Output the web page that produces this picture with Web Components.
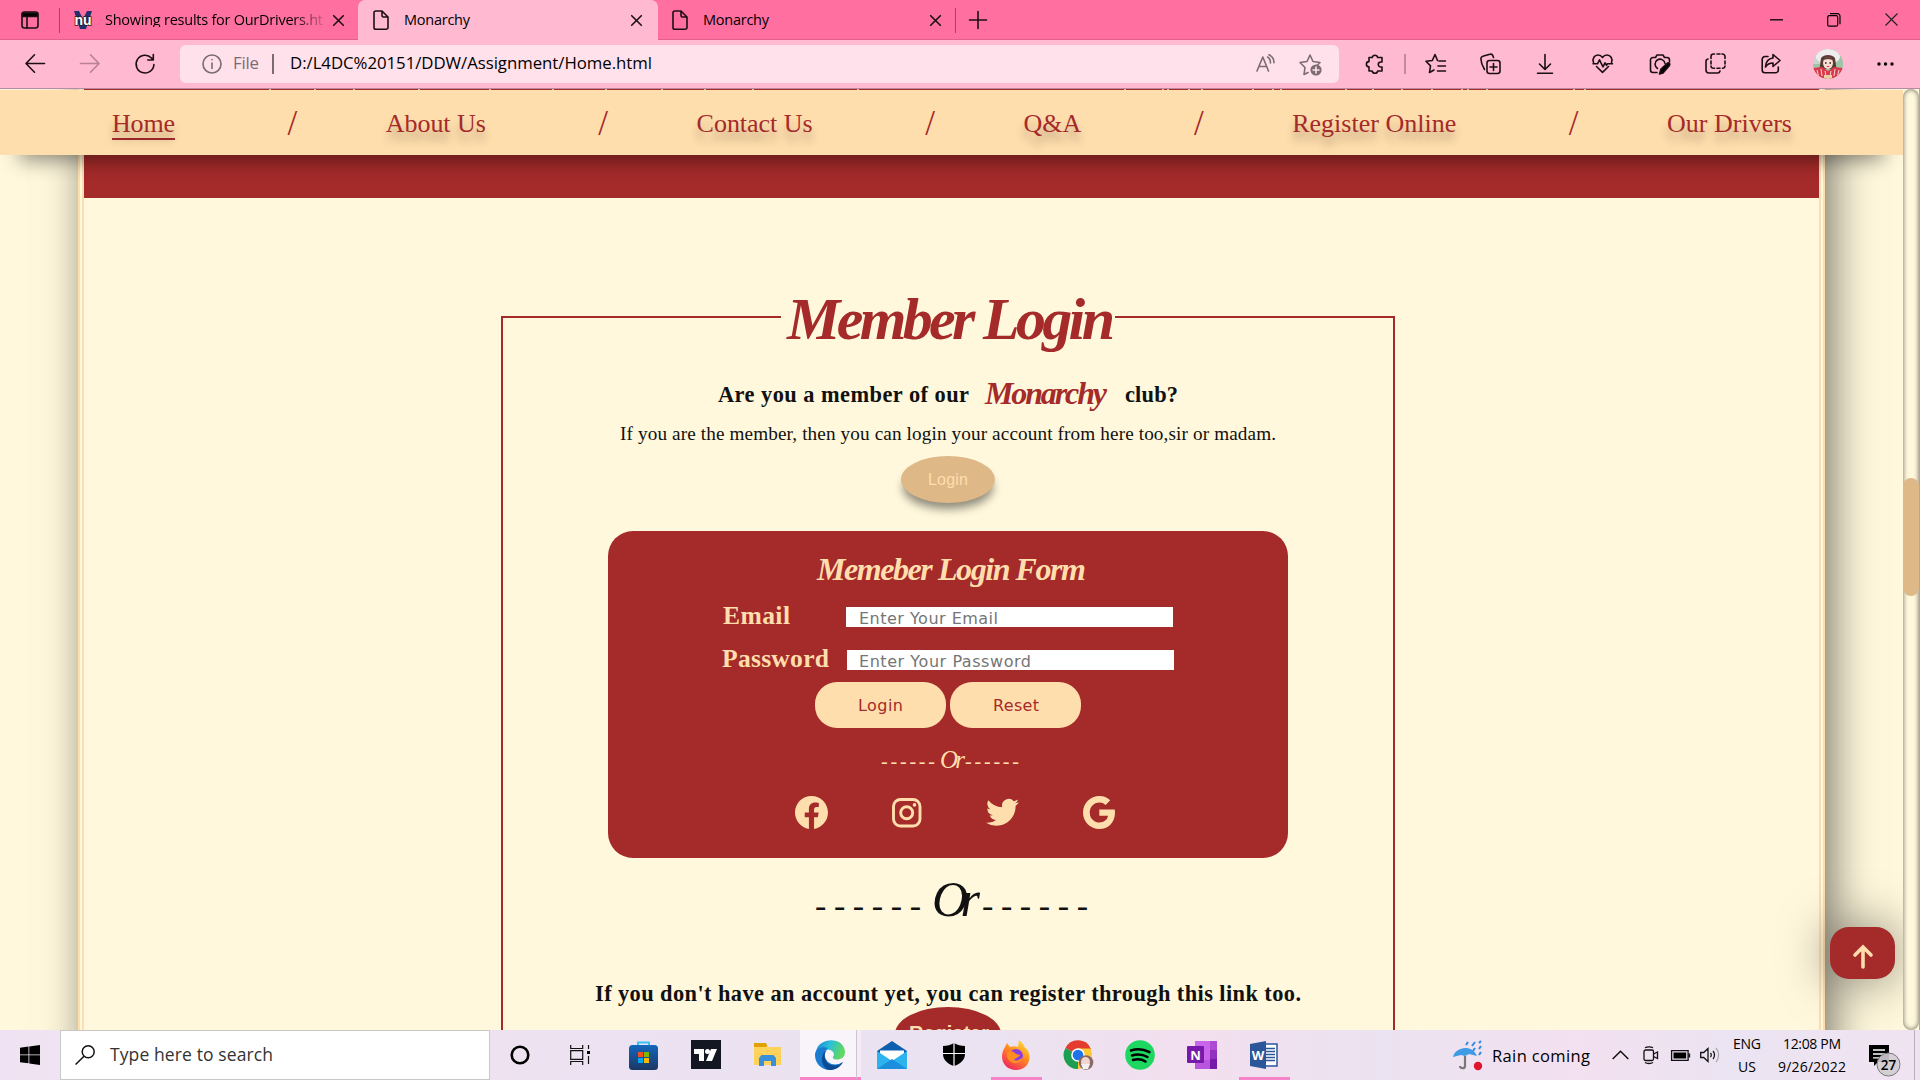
<!DOCTYPE html>
<html lang="en">
<head>
<meta charset="utf-8">
<title>Monarchy</title>
<style>
html,body{margin:0;height:1080px;overflow:hidden}
body{width:1920px;background:#fff8dc}
</style>
</head>
<body>
<browser-desktop></browser-desktop>
<script>
/* Baseline offset from the middle of the line box, per font family. */
const FONTS = {
  serif: ['"Liberation Serif", serif', .3375],
  script: ['"Edwardian Script ITC", "Liberation Serif", serif', .3375],
  sans: ['"Liberation Sans", sans-serif', .3465],
  ui: ['"Open Sans", sans-serif', .388],
  form: ['"DejaVu Sans", sans-serif', .346]
};
/* A text item: x and width on the line, baseline y. */
const T = (text, x, w, size, base, font = 'ui', style = '') => {
  const [fam, k] = FONTS[font];
  return {x, w, y: base - size / 2 - k * size,
    html: m => `<fit-text w="${w}" style="${m};height:${size}px;line-height:${size}px;font-size:${size}px;font-family:${fam.replace(/"/g, "'")};${style}">${text}</fit-text>`};
};
/* A drawn item. */
const I = (x, y, w, h, body, attrs = '') => ({x, w, y,
  html: m => `<svg style="${m}" width="${w}" height="${h}" viewBox="0 0 ${w} ${h}" ${attrs}>${body}</svg>`});
/* A box item. */
const B = (x, y, w, h, style, inner = '') => ({x, w, y,
  html: m => `<div style="${m};width:${w}px;height:${h}px;${style}">${inner}</div>`});
/* A flex row: each item follows the one before it, spaced with margins. */
const row = (left, top, height, items) => {
  let at = left;
  return `<div class="row" style="height:${height}px">` + items.map(i => {
    const m = `margin:${(i.y - top).toFixed(2)}px 0 0 ${(i.x - at).toFixed(2)}px`;
    at = i.x + i.w;
    return i.html(m);
  }).join('') + '</div>';
};
const BASE = `<style>
:host{display:block;box-sizing:border-box}
*{box-sizing:border-box}
.row{display:flex;align-items:flex-start}
.row>*{flex:none}
svg{display:block;overflow:visible}
</style>`;
const define = (name, css, body) => customElements.define(name, class extends HTMLElement {
  constructor() {
    super();
    this.attachShadow({mode: 'open'}).innerHTML = BASE + `<style>${css}</style>` + body;
  }
});

/* Text that spreads its letters to fill the given width. */
customElements.define('fit-text', class extends HTMLElement {
  constructor() {
    super();
    this.attachShadow({mode: 'open'}).innerHTML =
      '<style>:host{display:block;white-space:pre}span{display:inline-block}</style><span><slot></slot></span>';
  }
  connectedCallback() {
    const w = +this.getAttribute('w'), s = this.shadowRoot.querySelector('span');
    this.style.width = w + 'px';
    const n = Math.max(1, this.textContent.length - 1);
    s.style.letterSpacing = ((w - s.getBoundingClientRect().width) / n).toFixed(3) + 'px';
  }
});

const K = 'fill="none" stroke="#1b0f14" stroke-width="1.6" stroke-linecap="round" stroke-linejoin="round"';
const cross = x => I(x, 15, 11, 11, '<path d="M.7.7l9.6 9.6M10.300.7L.7 10.300"/>', K);
const file = x => I(x, 10, 16, 20, '<path d="M2.500 1H9l6 6v10.500a1.800 1.800 0 0 1-1.800 1.800H2.800A1.800 1.800 0 0 1 1 17.500V2.800A1.800 1.800 0 0 1 2.800 1M9 1v4.500A1.500 1.500 0 0 0 10.500 7H15"/>', K);

define('tab-strip', `
:host{height:40px;background:#ff6fa0;border-bottom:1px solid #e0608e}
.active{height:40px;background:#ffb9d0;border-radius:7px 7px 0 0}`,
row(0, 0, 40, [
  I(21, 11, 18, 18, '<rect x="1" y="1" width="16" height="16" rx="2.500"/><path d="M1.500 2h15v3.500h-15z" fill="#000"/><path d="M6 5v12"/>', K),
  B(59, 8, 1, 25, 'background:#a3456a'),
  I(73, 10, 20, 20, '<path d="M1 1h5l4 8 4-8h5l-6 18H7z" fill="#24306e"/><text x="10" y="14.500" text-anchor="middle" textLength="17" font-family="Liberation Sans" font-weight="bold" font-size="14" fill="#fff" stroke="#222" stroke-width="1.600" paint-order="stroke">nu</text>'),
  T('Showing results for OurDrivers.ht', 105, 218, 14.5, 25.6, 'ui', '-webkit-mask-image:linear-gradient(90deg,#000 86%,rgba(0,0,0,.15))'),
  cross(333),
  {x: 358, w: 300, y: 0, html: m => `<div class="active" style="${m};width:300px">` + row(358, 0, 40, [file(373), T('Monarchy', 404, 66, 14.5, 25.6), cross(631)]) + '</div>'},
  file(672), T('Monarchy', 703, 66, 14.5, 25.6), cross(930),
  B(955, 8, 1, 25, 'background:#a3456a'),
  I(969, 11, 18, 18, '<path d="M9 .5v17M.5 9h17"/>', K),
  I(1770, 19, 13, 2, '<path d="M0 .8h13" stroke="#000" stroke-width="1.300"/>'),
  I(1827, 13, 14, 14, '<rect x=".7" y="2.700" width="10" height="10.500" rx="1.500"/><path d="M3 .7h7.500a2.500 2.500 0 0 1 2.500 2.500v8"/>', 'fill="none" stroke="#000" stroke-width="1.200"'),
  I(1885, 13, 13, 13, '<path d="M.5.5l12 12M12.500.5l-12 12" stroke="#222" stroke-width="1.200"/>')
]));

const G = K.replace('#1b0f14', '#7b6b72');
define('tool-bar', `
:host{height:49px;background:#ffb9d0;border-bottom:1px solid #b98ba0}
.addr{background:#ffe1eb;border-radius:6px}`,
row(0, 40, 48, [
  I(25, 54, 20, 20, '<path d="M19.500 9.500H1M9.500.8L1 9.500l8.500 8.700"/>', K),
  I(80, 54, 20, 20, '<path d="M.5 9.500H19M10.500.8l8.500 8.700-8.500 8.700"/>', K.replace('#1b0f14', '#b98195')),
  I(135, 54, 20, 20, '<path d="M18.900 10.500a8.900 8.900 0 1 1-2.400-6.500L18 5.800M18.300.5v5.500h-5.500"/>', K),
  {x: 180, w: 1159, y: 45, html: m => `<div class="addr" style="${m};width:1159px;height:38px">` + row(180, 45, 38, [
    I(202, 54, 20, 20, '<circle cx="10" cy="10" r="9"/><path d="M10 9v5.500M10 5.500v.3"/>', G),
    T('File', 233, 26, 16.800, 70, 'ui', 'color:#7b6b72'),
    B(272, 54, 1.5, 20, 'background:#7b6b72'),
    T('D:/L4DC%20151/DDW/Assignment/Home.html', 290, 362, 16.800, 70.400),
    I(1256, 54, 20, 18, '<path d="M1 17L6.800 3l5.700 14M3 12.500h7.700M11.500 3c2 1 3 3 3 6M13 .8c3.500 1.500 5 4.500 5 8"/>', G),
    I(1299, 53, 24, 23, '<path d="M9 19.500L5 21.500l1-7L1 9.500l7-1L11 2l3 6.500 7 1-2.500 2.500"/><circle cx="17" cy="17" r="5.600" fill="#7b6b72" stroke="none"/><path d="M17 14v6M14 17h6" stroke="#ffe1eb"/>', G)
  ]) + '</div>'},
  I(1365, 54, 19, 20, '<path d="M4 3.500h3.200a2.800 2.800 0 0 1 5.500 0H17v4.500h-1.200a2.500 2.500 0 0 0 0 5H17v4h-4.300a2.800 2.800 0 0 1-5.500 0H4v-4.200a2.600 2.600 0 0 1 0-5.200z"/>', K),
  B(1404, 54, 1.5, 20, 'background:#c08ba0'),
  I(1425, 53, 21, 21, '<path d="M12.500 7.500L10 1.500 7.300 7.500 1 8.300l4.500 4.600-1 6.600 4.500-2.500M14 8h6.500M13 13h7.500M12.500 18h8"/>', K),
  I(1480, 53, 21, 21, '<rect x="7" y="7.500" width="13" height="13" rx="2.500"/><path d="M13.500 10.500v7M10 14h7M4.500 16.500C2 12.500 1 9 .8 5.500 1 4 2 3.500 3.500 3L10 1.200c1.500-.3 2.500.3 3 1.800l.5 1.500"/>', K),
  I(1537, 54, 16, 20, '<path d="M8 .5v14.500M2.500 10L8 15.500 13.500 10M.5 19.300h15"/>', K),
  I(1592, 54, 21, 20, '<path d="M1.500 8.500C0 4.500 2.500 1 6 1c2 0 3.500 1 4.500 2.500C11.500 2 13 1 15 1c3.500 0 6 3.500 4.500 7.500M4.500 12.500l6 5.800 6-5.800M1 9.800h4.500l2-4 3.500 7 2-4 1.500 2.500 1-1.500h5"/>', K),
  I(1649, 53, 22, 22, '<path d="M8 19.500H4A2.500 2.500 0 0 1 1.500 17V7A2.500 2.500 0 0 1 4 4.500h2.500L8 2h6l1.500 2.500H18A2.500 2.500 0 0 1 20.500 7v2M8.500 15.500a5 5 0 1 1 7.500-5"/><path d="M10.500 21l1.500-5 6.500-6c1.500-.5 3 .5 2 2.500L14 20z" fill="#000"/>', K),
  I(1705, 53, 21, 21, '<path d="M6 5.500V3.500A2.500 2.500 0 0 1 8.500 1H9.500M12 1h3M17 1h.5A2.500 2.500 0 0 1 20 3.500v2M20 8v3M20 13a2.500 2.500 0 0 1-2.500 2.300M15 15.300h-3M9.500 15.300H8.500A2.500 2.500 0 0 1 6 13M6 11V8M3 6A2.500 2.500 0 0 0 1 8.500V17A3 3 0 0 0 4 20h8.500a2.500 2.500 0 0 0 2.500-2"/>', K),
  I(1761, 53, 20, 21, '<path d="M7 3.500H4A2.800 2.800 0 0 0 1.200 6.300V17A2.800 2.800 0 0 0 4 19.800h10.500a2.800 2.800 0 0 0 2.800-2.800v-3M12 1.500l7 6-7 6v-3.500c-4 0-6 1.500-7.500 4 .3-5 3-8.500 7.500-9z"/>', K),
  I(1813, 49, 30, 30, '<clipPath id="av"><circle cx="15" cy="15" r="15"/></clipPath><g clip-path="url(#av)"><path d="M0 0h30v30H0z" fill="#9dc3a9"/><path d="M0 0h15v15H0z" fill="#c9d4cc"/><ellipse cx="15" cy="7.500" rx="12" ry="7.500" fill="#eeecef"/><path d="M8 9c3-4 11-4 14 0l1.500 11h-17z" fill="#5b3a34"/><ellipse cx="15" cy="14" rx="5" ry="6" fill="#f9dfd6"/><path d="M10 11c2-4 8-4 10 0l-5-1z" fill="#5b3a34"/><path d="M0 19l9-1 6 4 6-4 9 1v11H0z" fill="#d93a4c"/><path d="M4 21l2 8M8 20l1 7M26 21l-2 8M22 20l-1 7M12 22l1 5M18 22l-1 5" stroke="#f9d3d0"/><circle cx="12.800" cy="14" r=".9" fill="#432"/><circle cx="17.200" cy="14" r=".9" fill="#432"/><path d="M13.800 17.500h2.400" stroke="#d33"/><path d="M11 26h8v4h-8z" fill="#e7d0a8"/></g>'),
  I(1877, 62, 17, 4, '<circle cx="2" cy="2" r="1.700"/><circle cx="8.500" cy="2" r="1.700"/><circle cx="15" cy="2" r="1.700"/>')
]));

define('site-nav', `
:host{display:flex;justify-content:space-between;align-items:center;height:65px;padding:3px 111px 0 112px;background:#ffdead;
 box-shadow:0 25px 20px -20px rgba(0,0,0,.45);font:26px/30px "Liberation Serif",serif;color:#a52a2a}
a{display:block;text-shadow:0 9px 8px rgba(0,0,0,.28)}
.on{border-bottom:2px solid #a52a2a;line-height:28px;margin-top:1px}
i{font-style:normal;font-size:35px;margin:0 -12px 0 12px}`,
['Home', 'About Us', 'Contact Us', 'Q&amp;A', 'Register Online', 'Our Drivers'].map((s, n) =>
  `<a${n ? '' : ' class="on"'}><fit-text w="${[63, 100, 116, 58, 164, 125][n]}">${s}</fit-text></a>`).join('<i>/</i>'));

const SC = 'color:#a52a2a;font-weight:bold;font-style:italic;';
const SN = 'color:#ffdead;font-weight:bold;font-style:italic;';
define('login-card', `
:host{width:680px;height:327px;background:#a52a2a;border-radius:25px;color:#ffdead}
.in{background:#fff}
.btn{background:#ffdead;border-radius:22px}`,
row(608, 531, 76, [T('Memeber Login Form', 817, 269, 32, 580, 'script', SN)]) +
row(608, 607, 43, [T('Email', 723, 67, 25.6, 624.500, 'serif', 'font-weight:bold'),
  {x: 846, w: 327, y: 607, html: m => `<div class="in" style="${m};width:327px;height:20px">` + row(846, 607, 20, [T('Enter Your Email', 859, 139, 16, 624.500, 'form', 'color:#757575')]) + '</div>'}]) +
row(608, 650, 32, [T('Password', 722, 107, 25.6, 667.500, 'serif', 'font-weight:bold'),
  {x: 847, w: 327, y: 650, html: m => `<div class="in" style="${m};width:327px;height:20px">` + row(847, 650, 20, [T('Enter Your Password', 859, 172, 16, 667.500, 'form', 'color:#757575')]) + '</div>'}]) +
row(608, 682, 65, [[815, 'Login', 858, 45], [950, 'Reset', 993, 46]].map(([x, s, tx, w]) => (
  {x, w: 131, y: 682, html: m => `<div class="btn" style="${m};width:131px;height:46px">` + row(x, 682, 46, [T(s, tx, w, 16, 712, 'form', 'color:#a52a2a')]) + '</div>'}))) +
row(608, 747, 45, [T('------', 881, 54, 20, 768, 'script', 'font-style:italic'), T('Or', 940, 25, 25, 768, 'script', 'font-style:italic'), T('------', 965, 54, 20, 768, 'script', 'font-style:italic')]) +
row(608, 792, 60, [
  I(795, 796, 33, 33, '<path transform="scale(2.060)" d="M16 8.049c0-4.446-3.582-8.050-8-8.050C3.580 0-.002 3.603-.002 8.050c0 4.017 2.926 7.347 6.750 7.951v-5.625h-2.030V8.050H6.750V6.275c0-2.017 1.195-3.131 3.022-3.131.876 0 1.791.157 1.791.157v1.980h-1.009c-.993 0-1.303.621-1.303 1.258v1.510h2.218l-.354 2.326H9.250V16c3.824-.604 6.750-3.934 6.750-7.951z" fill="#ffdead"/>'),
  I(892, 798, 29, 29, '<rect x="1.500" y="1.500" width="26.500" height="26.500" rx="7"/><circle cx="14.700" cy="14.700" r="6"/><circle cx="22.500" cy="6.900" r="1.800" fill="#ffdead" stroke="none"/>', 'fill="none" stroke="#ffdead" stroke-width="2.900"'),
  I(986, 799, 33, 27, '<path transform="scale(2.060) translate(0 -2)" d="M5.026 15c6.038 0 9.341-5.003 9.341-9.334 0-.14 0-.282-.006-.422A6.685 6.685 0 0 0 16 3.542a6.658 6.658 0 0 1-1.889.518 3.301 3.301 0 0 0 1.447-1.817 6.533 6.533 0 0 1-2.087.793A3.286 3.286 0 0 0 7.875 6.030a9.325 9.325 0 0 1-6.767-3.429 3.289 3.289 0 0 0 1.018 4.382A3.323 3.323 0 0 1 .64 6.575v.045a3.288 3.288 0 0 0 2.632 3.218 3.203 3.203 0 0 1-.865.115 3.230 3.230 0 0 1-.614-.057 3.283 3.283 0 0 0 3.067 2.277A6.588 6.588 0 0 1 .78 13.580a6.320 6.320 0 0 1-.78-.045A9.344 9.344 0 0 0 5.026 15z" fill="#ffdead"/>'),
  I(1083, 796, 33, 33, '<path transform="scale(2.040 2.060)" d="M15.545 6.558a9.420 9.420 0 0 1 .139 1.626c0 2.434-.87 4.492-2.384 5.885h.002C11.978 15.292 10.158 16 8 16A8 8 0 1 1 8 0a7.689 7.689 0 0 1 5.352 2.082l-2.284 2.284A4.347 4.347 0 0 0 8 3.166c-2.087 0-3.860 1.408-4.492 3.304a4.792 4.792 0 0 0 0 3.063h.003c.635 1.893 2.405 3.301 4.492 3.301 1.078 0 2.004-.276 2.722-.764h-.003a3.702 3.702 0 0 0 1.599-2.431H8v-3.080h7.545z" fill="#ffdead"/>')
]));

define('member-panel', `
:host{width:894px;height:760px;border:solid #a52a2a;border-width:0 2px}
.pill{border-radius:50%}`,
row(503, 316, 69, [B(503, 316, 278, 2, 'background:#a52a2a'), T('Member Login', 787, 328, 60, 339, 'script', SC), B(1115, 316, 278, 2, 'background:#a52a2a')]) +
row(503, 385, 38, [T('Are you a member of our', 718, 251, 22.4, 402.500, 'serif', 'font-weight:bold'), T('Monarchy', 985, 122, 32, 404, 'script', SC), T('club?', 1125, 53, 22.4, 402.500, 'serif', 'font-weight:bold')]) +
row(503, 423, 32, [T('If you are the member, then you can login your account from here too,sir or madam.', 620, 656, 19.2, 440, 'serif')]) +
row(503, 455, 76, [{x: 901, w: 94, y: 455.5, html: m => `<div class="pill" style="${m};width:94px;height:47px;background:#deb887;box-shadow:0 8px 10px -2px rgba(0,0,0,.45)">` + row(901, 455, 47, [T('Login', 928, 40, 16, 485, 'sans', 'color:#ffdead')]) + '</div>'}]) +
row(503, 531, 347, [{x: 608, w: 680, y: 531, html: m => `<login-card style="${m}"></login-card>`}]) +
row(503, 878, 100, [T('------', 815, 106, 34, 917, 'script', 'font-style:italic'), T('Or', 932, 48, 50, 916, 'script', 'font-style:italic'), T('------', 982, 106, 34, 917, 'script', 'font-style:italic')]) +
row(503, 978, 29, [T("If you don't have an account yet, you can register through this link too.", 595, 706, 22.4, 1001.500, 'serif', 'font-weight:bold')]) +
row(503, 1007, 60, [{x: 895, w: 106, y: 1007, html: m => `<div class="pill" style="${m};width:106px;height:54px;background:#a52a2a">` + row(895, 1007, 47, [T('Register', 909, 80, 20, 1040, 'sans', 'color:#ffdead;font-weight:bold')]) + '</div>'}]));

const specks = [269,314,353,418,489,552,605,661,704,752,857,1124,1162,1167,1188,1201,1252,1272,1280,1345,1372,1401,1431,1461,1467,1486,1573,1584];
define('site-page', `
:host{position:relative;width:1903px;height:941px;overflow:hidden;background:#fff8dc;color:#111}
site-nav{position:absolute;left:0;right:0;top:1px;z-index:2}
.wrap{margin:-60px 0 0 78px;width:1747px;height:1061px;border:6px double #ffdead;border-width:0 6px;box-shadow:8px 0 40px rgba(0,0,0,.52);background:#fff8dc}
.band{height:169px;padding-top:60px;background:#a52a2a}
member-panel{margin:118px 0 0 417px}
.top{position:absolute;left:1830px;top:838px;width:65px;height:52px;border-radius:19px;background:#a52a2a;box-shadow:0 0 50px rgba(0,0,0,.5);display:flex;align-items:center;justify-content:center}`,
`<site-nav></site-nav><div class="wrap"><div class="band">${row(84, 89, 1, specks.map(x => B(x, 89, 2, 1, 'background:#e8b9a0')))}</div><member-panel></member-panel></div>
<div class="top"><svg width="20" height="24" viewBox="0 0 20 24" style="margin-top:7px" fill="none" stroke="#ffdead" stroke-width="3.600" stroke-linecap="round"><path d="M10 3v19M2 10l8-8 8 8"/></svg></div>`);

define('scroll-track', `
:host{width:17px;height:941px;background:#fff8dc;border-right:1px solid #c69aa6}
.t{height:941px;width:16px;border-radius:8px;box-shadow:inset 0 0 5px rgba(0,0,0,.6);padding-top:389px}
.h{height:118px;border-radius:8px;background:#deb887}`, '<div class="t"><div class="h"></div></div>');

const line = (x, w) => B(x, 1077, w, 3, 'background:#f783c8');
define('task-bar', `
:host{height:50px;background:linear-gradient(90deg,#efe3f3,#f3e2ee 18%,#ece2f1 30%,#ebe3f1 52%,#f3dfef 62%,#ebe3f1 72%,#f3e0f0 82%,#ebe4f2 90%,#f0e3f1)}
.search{background:#fff;border:1px solid #c8c8c8}
.act{background:#f9f3fa;border-right:1px solid #cfc3d3;border-bottom:3px solid #f783c8}`,
row(0, 1030, 50, [
  I(20, 1045, 20, 20, '<path d="M0 2.800l8.500-1.200V9.500H0zM9.300 1.500L20 0v9.500H9.300zM0 10.300h8.500v8L0 17.200zM9.300 10.300H20V20L9.300 18.500z"/>'),
  {x: 60, w: 430, y: 1030, html: m => `<div class="search" style="${m};width:430px;height:50px">` + row(61, 1031, 48, [
    I(75, 1045, 20, 20, '<circle cx="13.200" cy="6.800" r="6"/><path d="M9 11.200L.6 19.500"/>', 'fill="none" stroke="#111" stroke-width="1.500"'),
    T('Type here to search', 110, 163, 17.500, 1062, 'ui', 'color:#333')]) + '</div>'},
  I(510, 1045, 20, 20, '<circle cx="10" cy="10" r="8.300" fill="none" stroke="#000" stroke-width="2.600"/>'),
  I(570, 1045, 21, 20, '<path d="M.7 0v3.500h12V0M.7 20v-3.500h12V20M.7 5.700h12v8.600H.7zM18.500 0v4M18.500 11v8" fill="none" stroke="#111" stroke-width="1.200"/><path d="M17 6h3v3h-3z"/>'),
  I(629, 1041, 29, 29, '<defs><linearGradient id="st" y2="1" x2="0"><stop stop-color="#1267bd"/><stop offset="1" stop-color="#1c3763"/></linearGradient></defs><path d="M9 6V1.500h11V6" fill="none" stroke="#35c2f5" stroke-width="2"/><rect y="4" width="29" height="25" rx="3.500" fill="url(#st)"/><path d="M9 11h5v5H9z" fill="#f25022"/><path d="M15 11h5v5h-5z" fill="#7fba00"/><path d="M9 17h5v5H9z" fill="#00a4ef"/><path d="M15 17h5v5h-5z" fill="#ffb900"/>'),
  I(691, 1040, 30, 29, '<path d="M0 0h30v29H0z" fill="#131722"/><path d="M3 9h10v12H8v-7H3zM20 9h6l-5 12h-6z" fill="#fff"/><circle cx="16.500" cy="11.500" r="2.500" fill="#fff"/>'),
  I(754, 1043, 28, 24, '<path d="M0 1h12l2 3h13v18H0z" fill="#ffd25c"/><path d="M0 0h12l1.500 3L12 4H0z" fill="#e0a106"/><path d="M5 23v-8l2.500-3h12l2.500 3v8h-5v-5h-7v5z" fill="#3a8fd9"/>'),
  {x: 800, w: 57, y: 1030, html: m => `<div class="act" style="${m};width:57px;height:50px">` + row(800, 1030, 47, [
    I(815, 1040, 30, 30, '<defs><linearGradient id="e1" x2="1" y2=".3"><stop stop-color="#1681d6"/><stop offset=".5" stop-color="#2cc0d8"/><stop offset="1" stop-color="#5fd95f"/></linearGradient></defs><path d="M1 12C3-3 29-4 30 12c0 7-7 8.500-11 7-2-1-1-2 0-4 0-5-7-7-12-3z" fill="url(#e1)"/><path d="M0 15C0 8 8 6 13 8c-3 2-4 5-3 9 2 7 10 10 18 5-3 5-8 8-13 8C6 30 0 23 0 15z" fill="#1a7bd0"/><path d="M12 10c-5 5-2 18 12 15l4-3c-3 6-9 8-13 8C6 29 4 14 12 10z" fill="#0b4b93"/>')]) + '</div>'},
  B(857, 1030, 4, 50, 'background:#f5ecf6;border-bottom:3px solid #f783c8'),
  I(877, 1041, 30, 28, '<path d="M0 10L15 0l15 10v5H0z" fill="#0f5fb0"/><path d="M3 9.500h24v10H3z" fill="#fff"/><path d="M0 10l15 10 15-10v18H0z" fill="#2db3ee"/><path d="M0 28l15-10L30 28z" fill="#1c8fdc"/>'),
  I(943, 1043, 22, 23, '<path d="M11 0c3 2 7 3 11 3v8c0 6-5 10-11 12C5 21 0 17 0 11V3c4 0 8-1 11-3z"/><path d="M11 0v23M0 10.500h22" stroke="#fff" stroke-width="1.200"/>'),
  I(1002, 1040, 28, 30, '<defs><linearGradient id="ff" x1=".8" x2=".2" y2="1"><stop stop-color="#ffe23e"/><stop offset=".45" stop-color="#ff8a1f"/><stop offset="1" stop-color="#ee2065"/></linearGradient></defs><path d="M3 7l2-4 3 4c3-1 6-1 8 0l1-7c3 2 5 5 6 8l2 1c6 9 1 21-11 21C2 30-4 18 3 7z" fill="url(#ff)"/><circle cx="14" cy="16" r="7" fill="#8b3ee0"/><path d="M5 13c3-3 7-2 9 1l4 1c-2 3-5 3-6 5 3 1 6 0 9-3-1 8-14 9-16-1z" fill="#ff8d20"/>'),
  I(1064, 1041, 30, 29, '<path d="M14 14L1.500 7A14 14 0 0 1 27 8z" fill="#e33b2e"/><path d="M14 14h13A14 14 0 0 1 14 28z" fill="#fcc934"/><path d="M14 14l0 14A14 14 0 0 1 1.500 7z" fill="#1e9e50"/><path d="M14 7.500h12.500A14 14 0 0 1 20 26z" fill="#fcc934"/><circle cx="14" cy="14" r="6.800" fill="#fff"/><circle cx="14" cy="14" r="5.300" fill="#1f73e8"/><circle cx="22" cy="21.500" r="7.300" fill="#8a6a66"/><ellipse cx="21.500" cy="21" rx="4.500" ry="5" fill="#f0d6cf"/><path d="M17 23h9l-2 5h-5z" fill="#f4f1f4"/>'),
  I(1125, 1040, 30, 30, '<circle cx="15" cy="15" r="14.800" fill="#1ed760"/><path d="M6 10.500c6-2 13-1.300 18.500 1.700M7 15.500c5-1.500 11-1 15.500 1.500M8 20c4-1.200 9-.8 12.500 1.500" fill="none" stroke="#000" stroke-width="2.500" stroke-linecap="round"/>'),
  I(1187, 1041, 30, 28, '<path d="M8 0h22v28H8z" fill="#ca64ea"/><path d="M23 0h7v9h-7z" fill="#ae4bd5"/><path d="M23 9h7v9h-7z" fill="#9332bf"/><path d="M8 19h15v9H8z" fill="#9332bf" opacity=".3"/><path d="M23 18h7v10h-7z" fill="#7719aa"/><rect y="5" width="17" height="17" rx="1" fill="#7719aa"/><text x="8.500" y="18.500" text-anchor="middle" font-family="Open Sans" font-weight="bold" font-size="13" fill="#fff">N</text>'),
  I(1250, 1041, 29, 28, '<path d="M14 3h13v22H14z" fill="#fff" stroke="#2b579a" stroke-width="1.500"/><path d="M16 7.500h9M16 10.500h9M16 13.500h9M16 16.500h9M16 19.500h9" stroke="#2b579a" stroke-width="1.500"/><path d="M0 3l16-3v28L0 25z" fill="#2b579a"/><text x="8" y="19" text-anchor="middle" font-family="Open Sans" font-weight="bold" font-size="13" fill="#fff">W</text>'),
  I(1452, 1040, 31, 30, '<path d="M1 17C3 8 19 3 25 16l-8-2-4 2-4-1z" fill="#3f9be6"/><path d="M13 16v10c0 3-5 3-5 0" fill="none" stroke="#777" stroke-width="2.200"/><path d="M14 5l2-3M20 6l3-4M27 3l2-2M21 11l2-3M27 9l2-3M27 15l2-3" stroke="#2f8be0" stroke-width="2"/><circle cx="26" cy="26" r="4.200" fill="#e0142f"/>'),
  T('Rain coming', 1492, 98, 16.500, 1063),
  I(1612, 1050, 17, 10, '<path d="M.7 9L8.500 1.200 16.300 9" fill="none" stroke="#111" stroke-width="1.500"/>'),
  I(1643, 1046, 16, 18, '<rect x="1" y="4" width="9.500" height="10.500" rx="1.500"/><path d="M10.500 8l4-2v6.500l-4-2M2 1.800C4 .5 8 .5 10 1.800M2 16.500c2 1.300 6 1.300 8 0"/>', 'fill="none" stroke="#111" stroke-width="1.300"'),
  I(1671, 1050, 20, 11, '<path d="M.6.6h16.500v9.800H.6zM18.500 3.500v4" fill="none" stroke="#111" stroke-width="1.300"/><path d="M2.500 2.500h12.700v6H2.500z"/>'),
  I(1700, 1047, 20, 16, '<path d="M.7 5.500h3L8 1.500v13l-4.300-4h-3zM10.500 6c1 1 1 3 0 4M13 4c2 2 2 6 0 8"/><path d="M16 1c3.500 4 3.500 10 0 14" stroke="#aaa"/>', 'fill="none" stroke="#111" stroke-width="1.300"'),
  {x: 1733, w: 28, y: 1030, html: m => `<div style="${m};width:28px">` + row(1733, 1030, 22, [T('ENG', 1733, 28, 14, 1049.500)]) + row(1733, 1052, 22, [T('US', 1738, 18, 14, 1072)]) + '</div>'},
  {x: 1778, w: 70, y: 1030, html: m => `<div style="${m};width:70px">` + row(1778, 1030, 22, [T('12:08 PM', 1783, 58, 14, 1049)]) + row(1778, 1052, 22, [T('9/26/2022', 1778, 68, 14, 1072)]) + '</div>'},
  I(1869, 1045, 33, 31, '<path d="M0 0h20v17H9l-4 4v-4H0z"/><path d="M4 5h12M4 9h12M4 12.800h8" stroke="#fff" stroke-width="1.300"/><circle cx="19.500" cy="19.500" r="11.500" fill="#d0ccd1" fill-opacity=".9" stroke="#777"/><text x="19.500" y="24.500" text-anchor="middle" font-family="Open Sans" font-weight="600" font-size="13.500">27</text>'),
  B(1914, 1030, 1, 50, 'background:#b9aebd')
]));

define('running-marks', `
:host{height:3px;margin-top:-3px}`, row(0, 1077, 3, [line(991, 51), line(1239, 51)]));

define('browser-desktop', `
:host{display:flex;flex-direction:column;width:1920px;height:1080px;font-family:"Open Sans",sans-serif;color:#000}
.view{display:flex;height:941px}`,
'<tab-strip></tab-strip><tool-bar></tool-bar><div class="view"><site-page></site-page><scroll-track></scroll-track></div><task-bar></task-bar><running-marks></running-marks>');
</script>
</body>
</html>
